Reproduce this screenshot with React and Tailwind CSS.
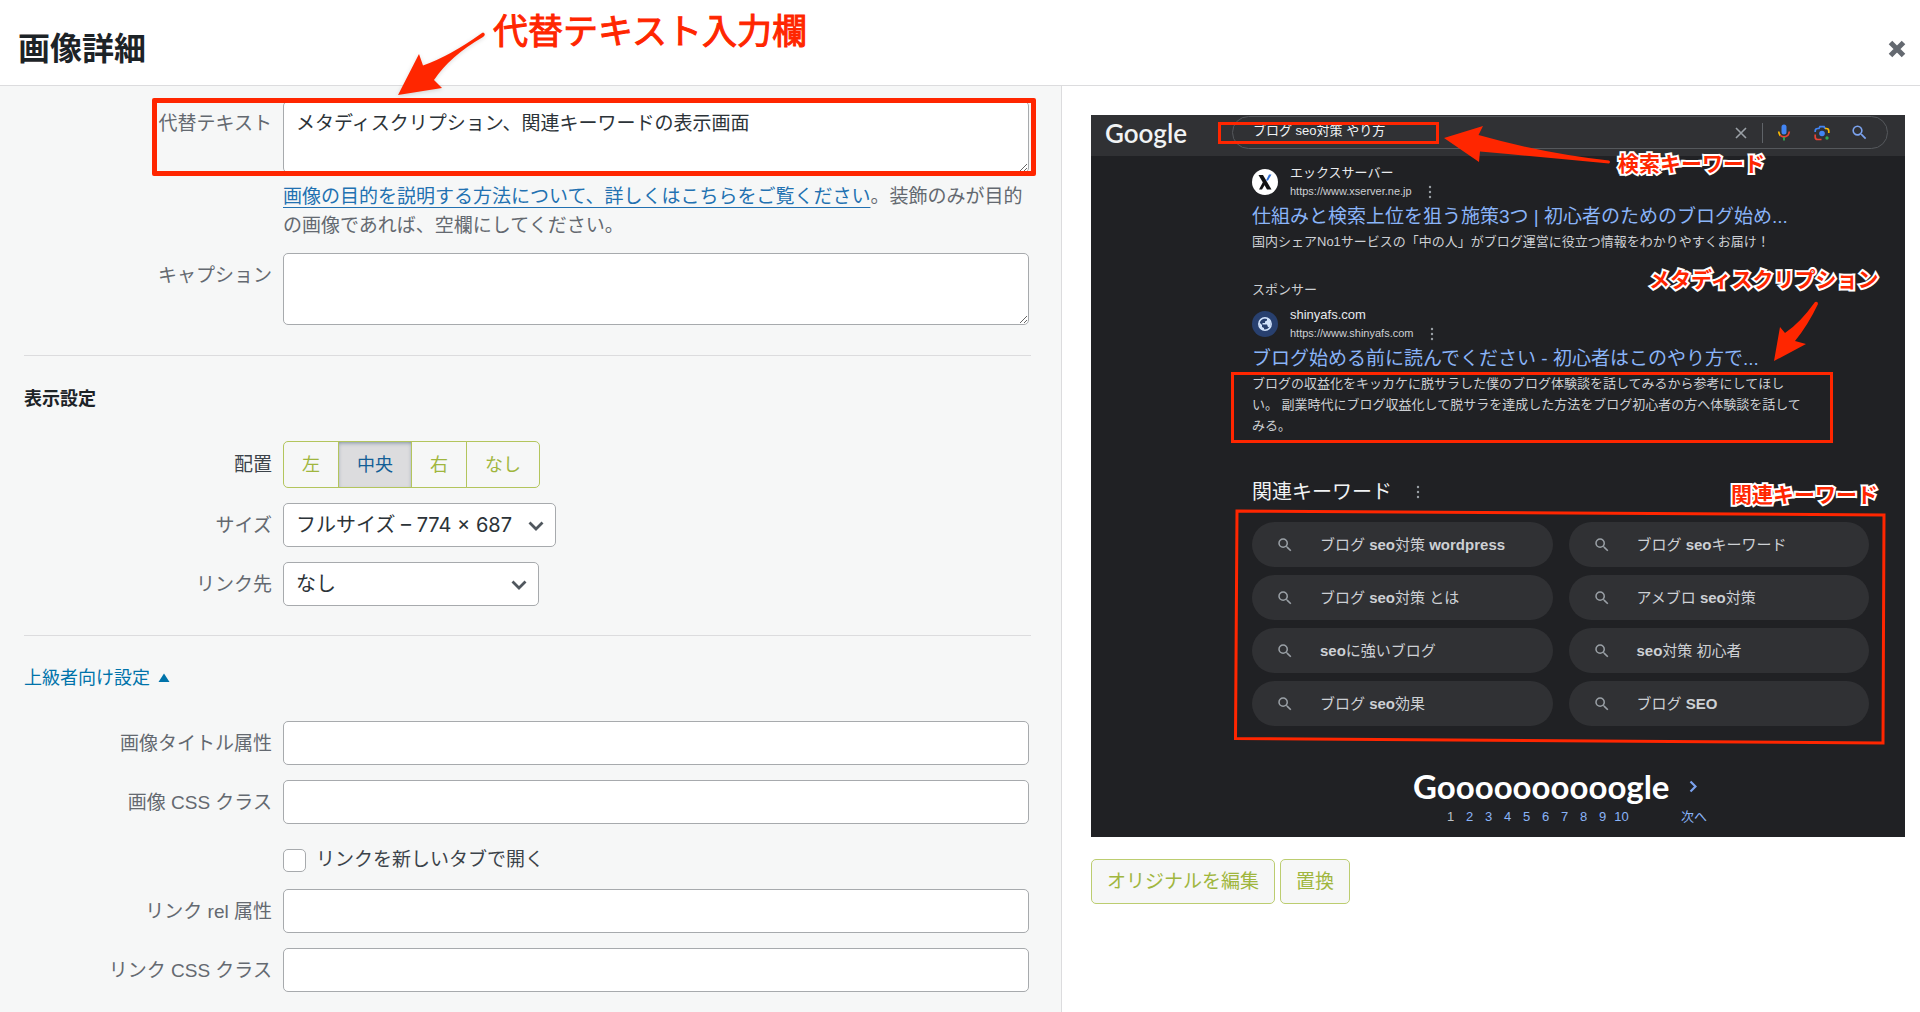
import React, { useState } from "react";
import { clsx } from "clsx";
import { MdSearch } from "react-icons/md";

const ALIGNMENTS = ["左", "中央", "右", "なし"];

const RELATED = [
  "ブログ seo対策 wordpress",
  "ブログ seoキーワード",
  "ブログ seo対策 とは",
  "アメブロ seo対策",
  "seoに強いブログ",
  "seo対策 初心者",
  "ブログ seo効果",
  "ブログ SEO",
];

const PAGES = [1, 2, 3, 4, 5, 6, 7, 8, 9, 10];

const fieldClass = "w-full rounded-[5px] border border-[#a7aaad] bg-white px-3 text-[#2c3338]";
const buttonClass =
  "border border-[#bccd70] bg-[#f6f7f7] px-[15px] text-[19px] leading-[28px] text-[#a0b63e]";

export default function App() {
  return (
    <div className="flex min-h-screen flex-col bg-white font-['Liberation_Sans','Noto_Sans_CJK_JP',sans-serif] text-[19px] leading-[28px] text-[#646970]">
      <Header />
      <main className="grid flex-1 grid-cols-[1062fr_858fr]">
        <SettingsPanel />
        <PreviewPanel />
      </main>
    </div>
  );
}

function Header() {
  return (
    <header className="relative flex h-[86px] items-center justify-between border-b border-[#dcdcde] pl-[18px] pr-[13px] pb-2 pt-5">
      <h1 className="text-[32px] font-bold leading-[48px] text-[#1d2327]">画像詳細</h1>
      <button type="button" aria-label="閉じる" className="p-0">
        <svg width="20" height="20" viewBox="0 0 20 20">
          <path d="M3.500 3.500l13 13M16.500 3.500L3.500 16.500" stroke="#646970" strokeWidth="5" />
        </svg>
      </button>
      <span className="absolute left-[493px] top-2 text-[35px] leading-[48px] text-[#ff2600] [-webkit-text-stroke:1px_#ff2600]">
        代替テキスト入力欄
      </span>
      <svg
        className="absolute left-[396px] top-[30px] z-10 drop-shadow-sm"
        width="92"
        height="68"
        viewBox="396 30 92 68"
      >
        <path
          d="M484 33Q486 35 483 37Q450 56 434 80L442 88L398 95L419 54L423 65.500Q450 56 482 33Q483 32 484 33Z"
          fill="#ff2600"
        />
      </svg>
    </header>
  );
}

function Row({ label, htmlFor, children, className }) {
  return (
    <div className={clsx("grid grid-cols-[248px_1fr] gap-x-[11px] pr-0.5", className)}>
      <label htmlFor={htmlFor} className="pt-[9px] text-right">
        {label}
      </label>
      <div>{children}</div>
    </div>
  );
}

function SelectBox({ id, options, className }) {
  return (
    <div className={clsx("relative", className)}>
      <select
        id={id}
        className="h-11 w-full appearance-none rounded-[5px] border border-[#a7aaad] bg-white pl-3 pr-8 font-['Inter','Noto_Sans_CJK_JP',sans-serif] text-[20px] text-[#2c3338]"
      >
        {options.map((option) => (
          <option key={option}>{option}</option>
        ))}
      </select>
      <svg
        className="pointer-events-none absolute right-3 top-[17px]"
        width="16"
        height="12"
        viewBox="0 0 16 12"
        fill="none"
      >
        <path d="M1.500 2.500L8 9L14.500 2.500" stroke="#50575e" strokeWidth="2.800" />
      </svg>
    </div>
  );
}

function SettingsPanel() {
  const [align, setAlign] = useState("中央");
  const [alt, setAlt] = useState("メタディスクリプション、関連キーワードの表示画面");

  return (
    <section className="border-r border-[#dcdcde] bg-[#f6f7f7] pb-5 pl-6 pr-[30px] pt-[15px]">
      <div className="relative">
        <Row label="代替テキスト" htmlFor="alt">
          <textarea
            id="alt"
            value={alt}
            onChange={(e) => setAlt(e.target.value)}
            className={clsx(fieldClass, "block h-[72px] py-2")}
          />
          <p className="mt-[9px] leading-[29px]">
            <a href="#alt-help" className="text-[#2271b1] underline underline-offset-4">
              画像の目的を説明する方法について、詳しくはこちらをご覧ください
            </a>
            。装飾のみが目的の画像であれば、空欄にしてください。
          </p>
        </Row>
        <div className="pointer-events-none absolute -right-[5px] -top-[3px] left-32 h-[78px] rounded-xs border-[5px] border-[#ff2600]" />
      </div>
      <Row label="キャプション" htmlFor="caption" className="mt-[13px]">
        <textarea id="caption" className={clsx(fieldClass, "block h-[72px] py-2")} />
      </Row>

      <hr className="mt-[30px] border-[#dcdcde]" />

      <h2 className="mt-[29px] text-[18px] font-bold text-[#1d2327]">表示設定</h2>
      <div className="mt-7 grid grid-cols-[248px_1fr] gap-x-[11px]">
        <span id="align-label" className="pt-[10px] text-right text-[#3c434a]">
          配置
        </span>
        <div role="group" aria-labelledby="align-label" className="flex">
          {ALIGNMENTS.map((item) => (
            <button
              key={item}
              type="button"
              onClick={() => setAlign(item)}
              className={clsx(
                "-ml-px h-[47px] border border-[#b3c55d] px-[18px] text-[18px] first:ml-0 first:rounded-l-[5px] last:rounded-r-[5px]",
                align === item
                  ? "bg-[#dcdcde] text-[#135e96] shadow-[inset_0_2px_5px_-2px_#5b7188]"
                  : "bg-[#f6f7f7] text-[#a0b63e]",
              )}
            >
              {item}
            </button>
          ))}
        </div>
      </div>
      <Row label="サイズ" htmlFor="size" className="mt-[15px]">
        <SelectBox
          id="size"
          className="w-[273px]"
          options={["フルサイズ – 774 × 687"]}
        />
      </Row>
      <Row label="リンク先" htmlFor="link-to" className="mt-[15px]">
        <SelectBox id="link-to" className="w-64" options={["なし"]} />
      </Row>

      <hr className="mt-[29px] border-[#dcdcde]" />

      <button
        type="button"
        className="mt-7 flex items-center gap-2 text-[18px] leading-[28px] text-[#0073aa]"
      >
        上級者向け設定
        <svg width="12" height="10" viewBox="0 0 12 10">
          <path d="M6 0.500L11.500 9H0.500Z" fill="#0073aa" />
        </svg>
      </button>
      <Row label="画像タイトル属性" htmlFor="title-attr" className="mt-[29px]">
        <input id="title-attr" type="text" className={clsx(fieldClass, "block h-11")} />
      </Row>
      <Row label="画像 CSS クラス" htmlFor="image-class" className="mt-[15px]">
        <input id="image-class" type="text" className={clsx(fieldClass, "block h-11")} />
      </Row>
      <div className="mt-[22px] flex items-center gap-[10px] pl-[259px] text-[#3c434a]">
        <input
          id="new-tab"
          type="checkbox"
          className="size-[23px] appearance-none rounded-[5px] border border-[#a7aaad] bg-white checked:bg-[#2271b1]"
        />
        <label htmlFor="new-tab">リンクを新しいタブで開く</label>
      </div>
      <Row label="リンク rel 属性" htmlFor="link-rel" className="mt-[15px]">
        <input id="link-rel" type="text" className={clsx(fieldClass, "block h-11")} />
      </Row>
      <Row label="リンク CSS クラス" htmlFor="link-class" className="mt-[15px]">
        <input id="link-class" type="text" className={clsx(fieldClass, "block h-11")} />
      </Row>
    </section>
  );
}

function PreviewPanel() {
  return (
    <section className="pl-[29px] pr-[15px] pt-[29px]">
      <SearchShot />
      <div className="mt-[22px] flex gap-[5px]">
        <button type="button" className={clsx(buttonClass, "h-[45px] rounded-[5px]")}>
          オリジナルを編集
        </button>
        <button type="button" className={clsx(buttonClass, "h-[45px] rounded-[5px]")}>
          置換
        </button>
      </div>
    </section>
  );
}

function Dots() {
  return (
    <svg width="4" height="14" viewBox="0 0 4 14" fill="#9aa0a6">
      <circle cx="2" cy="2" r="1.200" />
      <circle cx="2" cy="7" r="1.200" />
      <circle cx="2" cy="12" r="1.200" />
    </svg>
  );
}

function Result({ icon, name, url, title, children }) {
  return (
    <article>
      <div className="flex items-center gap-3">
        {icon}
        <div className="leading-[19px]">
          <div className="text-[13px] text-[#e8eaed]">{name}</div>
          <div className="flex items-center gap-4 text-[11px] text-[#cdd0d4]">
            {url}
            <Dots />
          </div>
        </div>
      </div>
      <a href="#result" className="mt-0.5 block text-[19px] leading-[28px] text-[#8ab4f8]">
        {title}
      </a>
      <p className="text-[13px] leading-[21px] text-[#cdd0d4]">{children}</p>
    </article>
  );
}

// latin words are bold, kana and kanji keep the normal weight
function Keyword({ text }) {
  return text
    .split(/([a-z]+)/i)
    .map((part, i) => (i % 2 ? <b key={i}>{part}</b> : <span key={i}>{part}</span>));
}

function SearchShot() {
  return (
    <div className="relative h-[722px] overflow-hidden bg-[#202124] text-[#cdd0d4]">
      <div className="flex h-[41px] items-start bg-[#303134] pl-[14px] pr-[17px] pt-px">
        <span className="w-[127px] font-['Lato',sans-serif] text-[26px] font-semibold leading-[34px] text-[#f1f3f4]">
          Google
        </span>
        <div className="flex h-[33px] flex-1 items-center rounded-full border border-[#55585c] pl-5 pr-[18px]">
          <span className="flex-1 pb-1 text-[13px] leading-[20px] text-[#f1f3f4]">
            ブログ seo対策 やり方
          </span>
          <svg width="12" height="12" viewBox="0 0 12 12">
            <path d="M1 1l10 10M11 1L1 11" stroke="#9aa0a6" strokeWidth="1.600" />
          </svg>
          <span className="ml-[15px] h-5 w-px bg-[#5f6368]" />
          <svg className="ml-[14px]" width="14" height="17" viewBox="0 0 14 17" fill="none">
            <rect x="4.500" y="0.500" width="5" height="10" rx="2.500" fill="#4285f4" />
            <path d="M1.700 7.500Q1.900 10 3.400 11.600" stroke="#fbbc04" strokeWidth="1.700" />
            <path d="M3.200 11.400Q7 14.600 10.800 11.400Q12 10 12.300 7.500" stroke="#ea4335" strokeWidth="1.700" />
            <path d="M7 13v3.500" stroke="#34a853" strokeWidth="1.800" />
          </svg>
          <svg className="ml-[23px]" width="16" height="16" viewBox="0 0 16 16" fill="none">
            <circle cx="8" cy="8.500" r="2.800" fill="#4285f4" />
            <path d="M1.200 7V6Q1.200 3.500 3.700 3.500H5L6 1.600H10L11 3.500" stroke="#4285f4" strokeWidth="1.700" />
            <path d="M11 3.500H12.300Q14.800 3.500 14.800 6V8" stroke="#fbbc04" strokeWidth="1.700" />
            <path d="M1.200 9.500V12Q1.200 14.500 3.700 14.500H7.500" stroke="#ea4335" strokeWidth="1.700" />
            <circle cx="13" cy="13" r="1.700" fill="#34a853" />
          </svg>
          <MdSearch className="ml-5 size-[19px] text-[#7ba2ee]" />
        </div>
      </div>

      <div className="pl-[161px] pr-9 pt-[7px]">
        <Result
          icon={
            <svg width="26" height="26" viewBox="0 0 26 26">
              <circle cx="13" cy="13" r="13" fill="#fff" />
              <path d="M6.500 6H11L19.500 20.500H15Z" fill="#111" />
              <path d="M11 13L7 20.500H10L13 15.500Z" fill="#111" />
              <path d="M14 11.500L17 5.500H19.500L16 11.500Z" fill="#2f6fd6" />
            </svg>
          }
          name="エックスサーバー"
          url="https://www.xserver.ne.jp"
          title="仕組みと検索上位を狙う施策3つ | 初心者のためのブログ始め..."
        >
          国内シェアNo1サービスの「中の人」がブログ運営に役立つ情報をわかりやすくお届け！
        </Result>

        <div className="mb-[5px] mt-7 text-[13px] leading-[20px]">スポンサー</div>
        <Result
          icon={
            <svg width="26" height="26" viewBox="0 0 26 26">
              <circle cx="13" cy="13" r="13" fill="#28406f" />
              <circle cx="13" cy="13" r="6.200" fill="#28406f" stroke="#d2e3fc" strokeWidth="1.500" />
              <path d="M7 11L10 14V16L12 17V19Q7 18 7 11ZM11 7L15 7.500V9.500L13 10.500V12H10.500V13.500H15L16 16L17.500 16.500Q20 12 17 8.500Q14 6 11 7Z" fill="#d2e3fc" />
            </svg>
          }
          name="shinyafs.com"
          url="https://www.shinyafs.com"
          title="ブログ始める前に読んでください - 初心者はこのやり方で..."
        >
          ブログの収益化をキッカケに脱サラした僕のブログ体験談を話してみるから参考にしてほし
          <br />
          い。 副業時代にブログ収益化して脱サラを達成した方法をブログ初心者の方へ体験談を話して
          <br />
          みる。
        </Result>

        <h3 className="mt-[42px] flex items-center gap-6 text-[20px] leading-[28px] text-[#f1f3f4]">
          関連キーワード
          <Dots />
        </h3>
        <div className="mt-4 grid grid-cols-2 gap-x-4 gap-y-2 text-[15px]">
          {RELATED.map((text) => (
            <a
              key={text}
              href="#related"
              className="flex h-[45px] items-center gap-[26px] rounded-full bg-[#303134] pl-6"
            >
              <MdSearch className="size-[18px] text-[#9aa0a6]" />
              <span>
                <Keyword text={text} />
              </span>
            </a>
          ))}
        </div>
      </div>

      <nav className="mt-[39px] pl-[322px] text-[13px] text-[#8ab4f8]">
        <div className="flex items-center gap-[14px]">
          <span className="w-[262px] font-['Lato',sans-serif] text-[33px] font-bold leading-[42px] text-white">
            Goooooooooogle
          </span>
          <svg width="8" height="13" viewBox="0 0 8 13" fill="none">
            <path d="M1.500 1.500L6.500 6.500L1.500 11.500" stroke="#7ba2ee" strokeWidth="2.200" />
          </svg>
        </div>
        <div className="flex items-center pl-7 leading-[20px]">
          {PAGES.map((page) => (
            <a
              key={page}
              href="#page"
              className={clsx("w-[19px] text-center", page === 1 && "text-[#bdc1c6]")}
            >
              {page}
            </a>
          ))}
          <a href="#next" className="ml-[50px]">
            次へ
          </a>
        </div>
      </nav>

      <Annotations />
    </div>
  );
}

function Note({ className, children }) {
  return (
    <span
      className={clsx(
        "absolute whitespace-nowrap text-[21px] font-bold leading-[28px] text-[#ff2600] [-webkit-text-stroke:4px_#fff] [paint-order:stroke_fill]",
        className,
      )}
    >
      {children}
    </span>
  );
}

function Annotations() {
  return (
    <div className="pointer-events-none absolute inset-0">
      <svg className="absolute left-0 top-0" width="814" height="722" viewBox="0 0 814 722" fill="none">
        <g stroke="#ff2600" strokeWidth="3">
          <rect x="128.500" y="8.500" width="218" height="19" />
          <rect x="141.500" y="258.500" width="599" height="68" />
          <path d="M146 396L793 400L792 628L144.500 623.500Z" />
        </g>
        <g fill="#ff2600">
          <path d="M353 23L392 11L387.500 20Q451 38 518 45.500Q520 47 518 48.500Q451 42 389 36.500L388 47Z" />
          <path d="M683 246L689 212L694 218Q709 208 724 187Q727 186 727 189Q717 210 704 226L715 229Z" />
        </g>
      </svg>
      <Note className="left-[527px] top-[35px]">検索キーワード</Note>
      <Note className="left-[558px] top-[151px]">メタディスクリプション</Note>
      <Note className="left-[640px] top-[366px]">関連キーワード</Note>
    </div>
  );
}
